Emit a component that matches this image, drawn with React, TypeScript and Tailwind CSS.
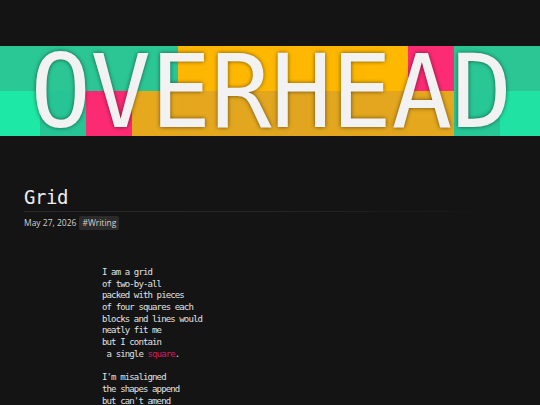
import React from 'react';

/**
 * Banner blocks (two rows of tiles behind the title)
 */
const topRow = [
  { w: 'w-[40px]', c: 'bg-[#29c895]' },
  { w: 'w-[46px]', c: 'bg-[#2bc694]' },
  { w: 'w-[46px]', c: 'bg-[#2bc694]' },
  { w: 'w-[46px]', c: 'bg-[#2ac795]' },
  { w: 'w-[46px]', c: 'bg-[#fdb602]' },
  { w: 'w-[46px]', c: 'bg-[#ffb800]' },
  { w: 'w-[46px]', c: 'bg-[#ffb802]' },
  { w: 'w-[46px]', c: 'bg-[#feb700]' },
  { w: 'w-[46px]', c: 'bg-[#ffb800]' },
  { w: 'w-[46px]', c: 'bg-[#fc2b74]' },
  { w: 'w-[46px]', c: 'bg-[#2ac795]' },
  { w: 'w-[40px]', c: 'bg-[#2bc694]' },
];

const bottomRow = [
  { w: 'w-[40px]', c: 'bg-[#1ee8a5]' },
  { w: 'w-[46px]', c: 'bg-[#27c595]' },
  { w: 'w-[46px]', c: 'bg-[#fc2a73]' },
  { w: 'w-[46px]', c: 'bg-[#e6a81d]' },
  { w: 'w-[46px]', c: 'bg-[#e5a71e]' },
  { w: 'w-[46px]', c: 'bg-[#e3a61f]' },
  { w: 'w-[46px]', c: 'bg-[#e1a520]' },
  { w: 'w-[46px]', c: 'bg-[#e2a61f]' },
  { w: 'w-[46px]', c: 'bg-[#e3a61e]' },
  { w: 'w-[46px]', c: 'bg-[#e4a71e]' },
  { w: 'w-[46px]', c: 'bg-[#27c796]' },
  { w: 'w-[40px]', c: 'bg-[#20e3a3]' },
];

function Banner() {
  return (
    <div className="relative h-[90px] w-full overflow-hidden">
      <div className="flex h-[45px]">
        {topRow.map((b, i) => (
          <div key={i} className={`${b.w} ${b.c} h-full shrink-0`} />
        ))}
      </div>
      <div className="flex h-[45px]">
        {bottomRow.map((b, i) => (
          <div key={i} className={`${b.w} ${b.c} h-full shrink-0`} />
        ))}
      </div>
      <div className="absolute inset-0 flex items-center justify-center">
        <span className="font-['DejaVu_Sans_Mono',monospace] text-[101px] leading-[90px] tracking-[-0.6px] text-[#f2f2f2] [text-shadow:0_0_4px_rgba(0,0,0,0.55)] pl-[2px] translate-y-[1px]">
          OVERHEAD
        </span>
      </div>
    </div>
  );
}

const poem: React.ReactNode[] = [
  'I am a grid',
  'of two-by-all',
  'packed with pieces',
  'of four squares each',
  'blocks and lines would',
  'neatly fit me',
  'but I contain',
  <>
    {' a single '}
    <span className="text-[#d81b60]">square</span>.
  </>,
  '',
  "I'm misaligned",
  'the shapes append',
  "but can't amend",
];

export default function App() {
  return (
    <div className="min-h-[405px] w-[540px] bg-[#141414] pt-[46px] overflow-hidden">
      <Banner />

      <div className="px-[24px] pt-[49px]">
        {/* Title */}
        <h1 className="font-['DejaVu_Sans_Mono',monospace] text-[19px] leading-[24px] tracking-[-0.4px] text-[#ececec]">
          Grid
        </h1>
        <div className="mt-[2px] h-px w-[470px] bg-gradient-to-r from-[#2a2a2a] via-[#262626] to-transparent" />

        {/* Meta */}
        <div className="mt-[4px] flex items-center gap-[3px] font-['Open_Sans',sans-serif] text-[8.5px] text-[#cfcfcf]">
          <span>May 27, 2026</span>
          <span className="rounded-[2px] bg-[#2b2b2b] px-[3px] py-[1px] leading-[12px] text-[#d0d0d0]">
            #Writing
          </span>
        </div>

        {/* Poem */}
        <div className="mt-[37px] pl-[78px] font-['DejaVu_Sans_Mono',monospace] text-[9px] leading-[11.7px] tracking-[-0.87px] text-[#e2e2e2] whitespace-pre">
          {poem.map((line, i) => (
            <div key={i} className="h-[11.7px]">
              {line}
            </div>
          ))}
        </div>
      </div>
    </div>
  );
}
